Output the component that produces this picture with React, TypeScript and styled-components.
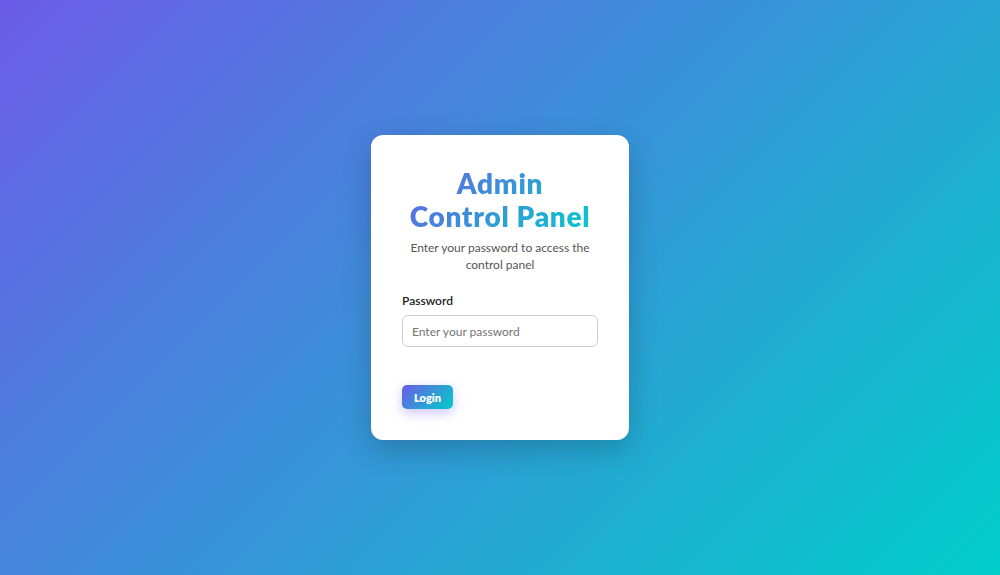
import { useState } from 'react';
import styled, { createGlobalStyle } from 'styled-components';

const GlobalStyle = createGlobalStyle`
  * {
    box-sizing: border-box;
  }
  body {
    margin: 0;
    font-family: 'Lato', 'Open Sans', sans-serif;
  }
`;

const Page = styled.div`
  min-height: 100vh;
  display: flex;
  align-items: center;
  justify-content: center;
  background: linear-gradient(135deg, #6c5ce7 0%, #00cec9 100%);
`;

const Card = styled.div`
  width: 258px;
  padding: 32px 31px 31px;
  background: #fff;
  border-radius: 12px;
  box-shadow: 0 10px 30px rgba(0, 0, 0, 0.2);
`;

const Title = styled.h1`
  margin: 0;
  text-align: center;
  font-family: 'Lato', sans-serif;
  font-size: 28px;
  font-weight: 800;
  line-height: 33px;
  letter-spacing: 0.7px;
  background: linear-gradient(135deg, #6c5ce7 0%, #00cec9 100%);
  -webkit-background-clip: text;
  background-clip: text;
  color: transparent;
`;

const Subtitle = styled.p`
  margin: 6px 0 0;
  text-align: center;
  font-size: 12px;
  line-height: 17px;
  color: #555;
`;

const Field = styled.div`
  margin-top: 20px;
  display: flex;
  flex-direction: column;
  gap: 7px;
`;

const Label = styled.label`
  font-size: 12px;
  font-weight: 600;
  color: #222;
`;

const Input = styled.input`
  width: 100%;
  height: 32px;
  padding: 0 9px;
  border: 1px solid #ccc;
  border-radius: 6px;
  font-family: inherit;
  font-size: 12px;
  color: #333;
  outline: none;

  ::placeholder {
    color: #666;
  }
`;

const Button = styled.button`
  margin-top: 38px;
  width: 51px;
  height: 24px;
  border: none;
  border-radius: 5px;
  background: linear-gradient(135deg, #6c5ce7 0%, #00cec9 100%);
  color: #fff;
  font-family: inherit;
  font-size: 11px;
  font-weight: 800;
  cursor: pointer;
  box-shadow: 0 4px 12px rgba(108, 92, 231, 0.35);
`;

export default function App() {
  const [password, setPassword] = useState('');
  return (
    <>
      <GlobalStyle />
      <Page>
        <Card>
          <Title>
            Admin
            <br />
            Control Panel
          </Title>
          <Subtitle>Enter your password to access the control panel</Subtitle>
          <Field>
            <Label htmlFor="pw">Password</Label>
            <Input
              id="pw"
              type="password"
              placeholder="Enter your password"
              value={password}
              onChange={(e) => setPassword(e.target.value)}
            />
          </Field>
          <Button>Login</Button>
        </Card>
      </Page>
    </>
  );
}
